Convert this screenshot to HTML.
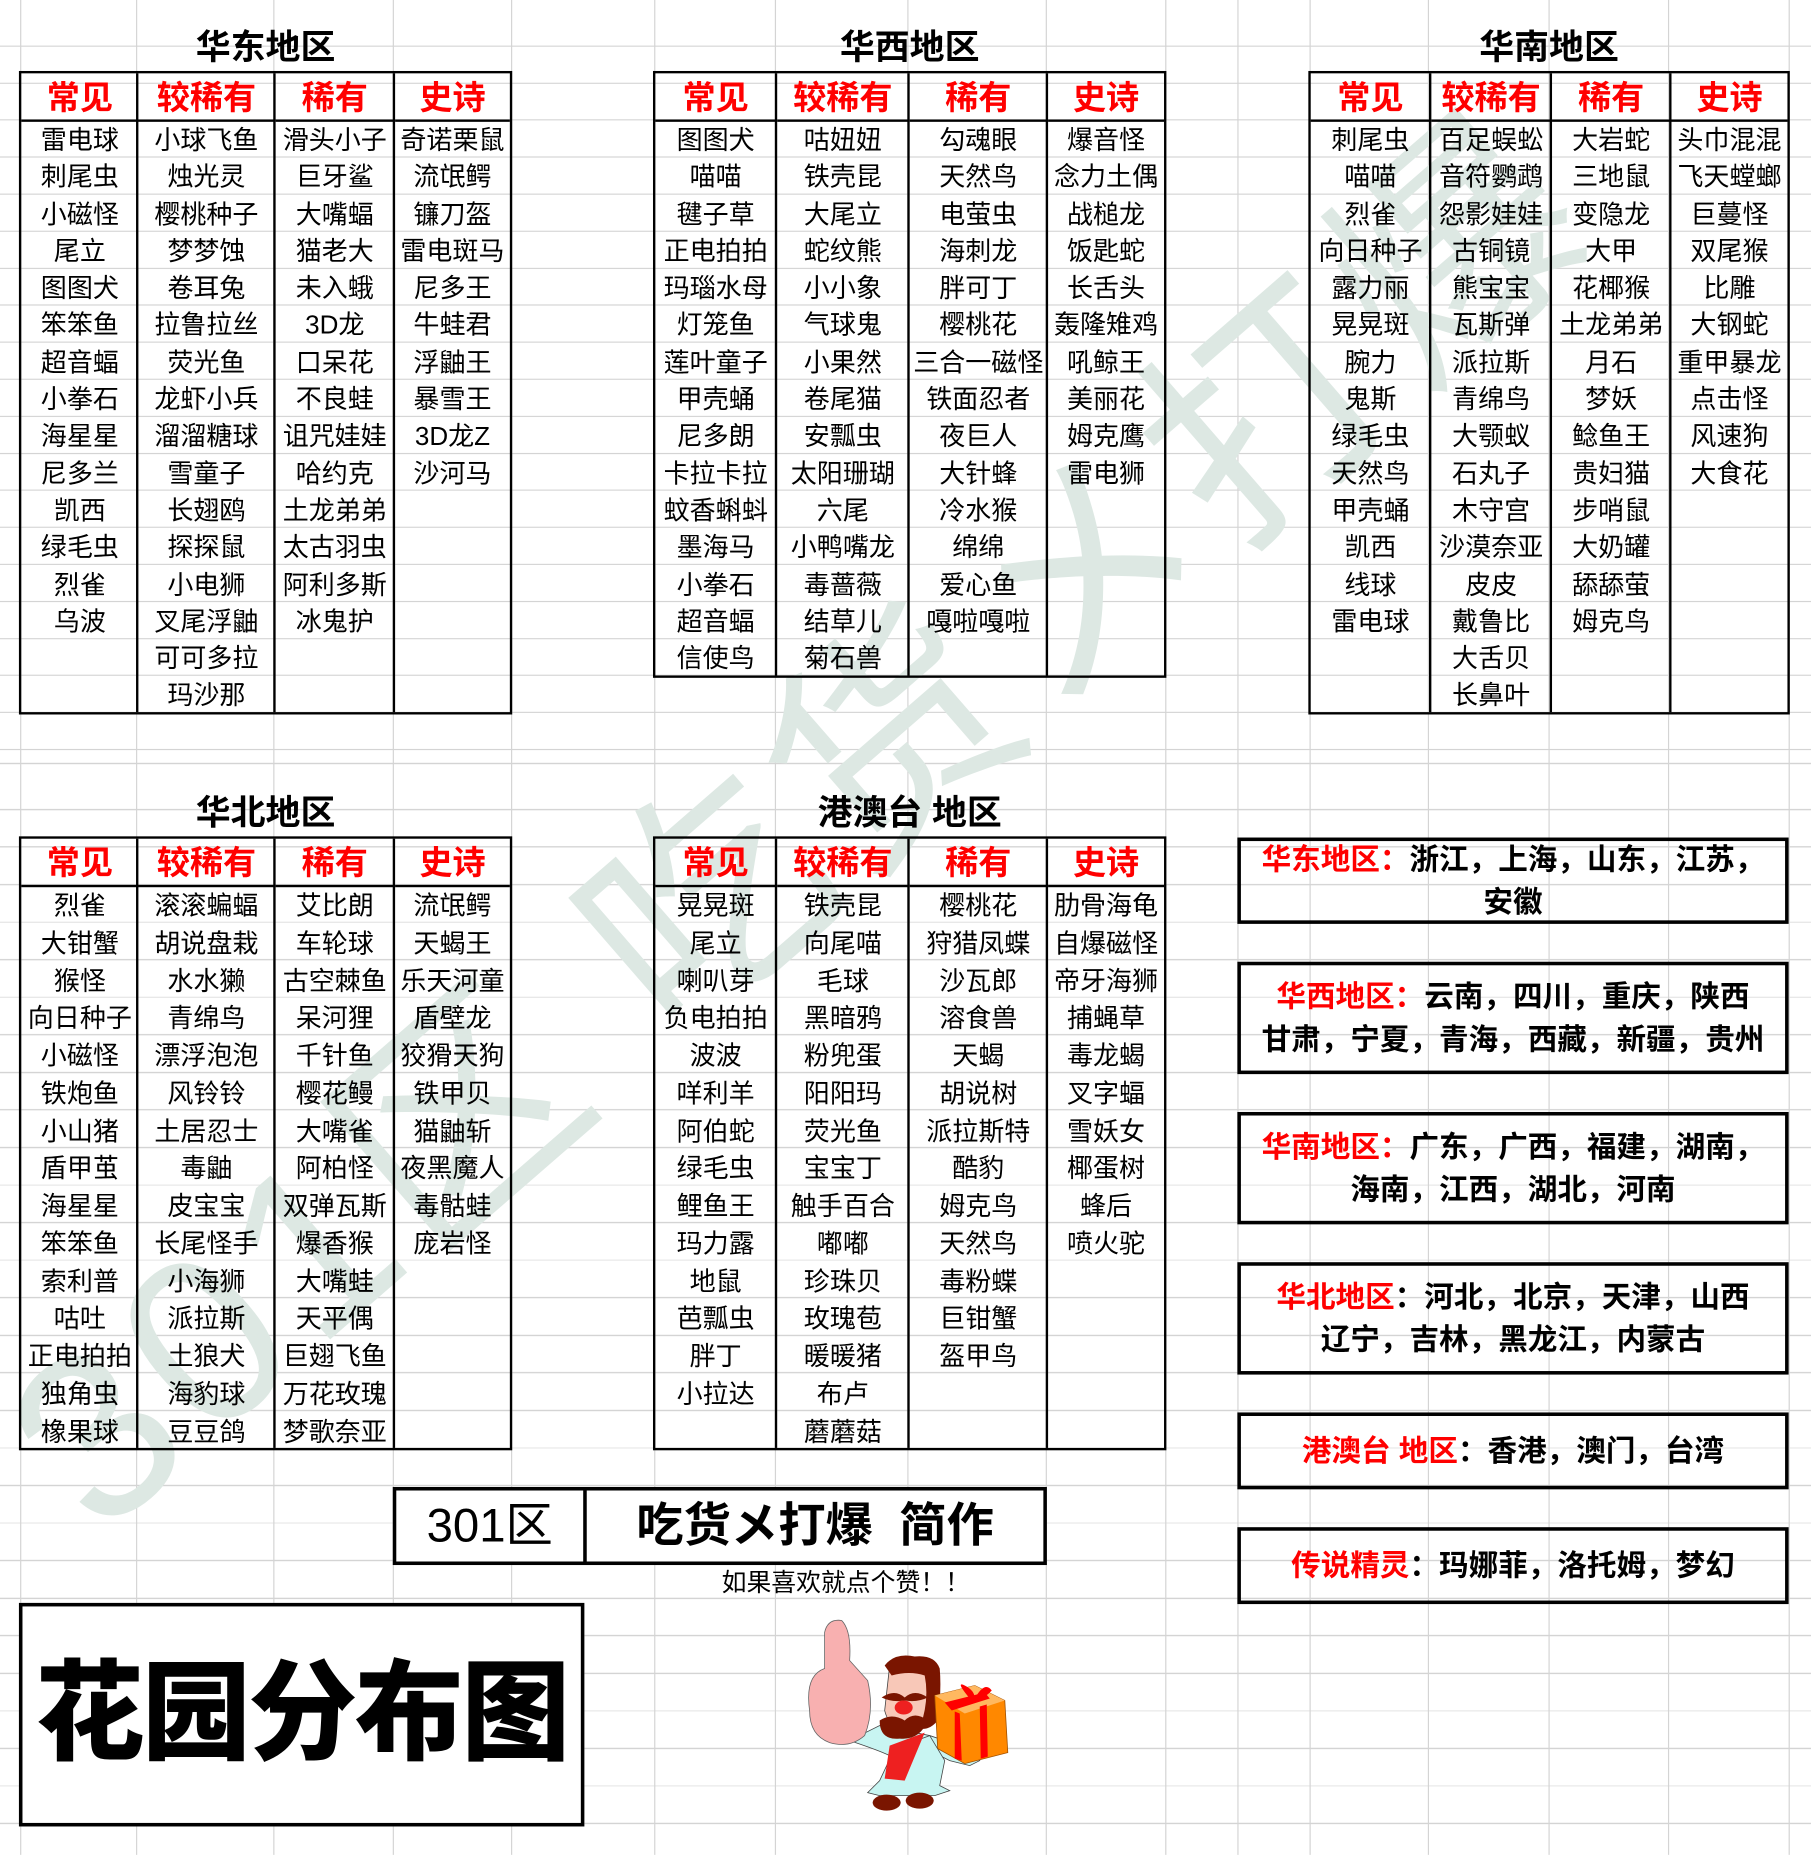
<!DOCTYPE html>
<html><head><meta charset="utf-8">
<style>
html,body{margin:0;padding:0;background:#fff;}
body{width:1811px;height:1855px;overflow:hidden;position:relative;}
#s{position:absolute;left:0;top:0;width:1531px;height:1568px;transform:scale(1.18295);transform-origin:0 0;font-family:"Liberation Sans","Noto Sans CJK SC",sans-serif;color:#000;}
.grid{position:absolute;left:0;width:1531px;}
.g1{top:0;height:640px;background-image:
repeating-linear-gradient(to bottom,transparent 0,transparent 30.3px,#d4d4d4 30.3px,#d4d4d4 31.3px);
background-position:0 8.1px;}
.g2{top:640px;height:928px;background-image:
repeating-linear-gradient(to bottom,transparent 0,transparent 30.75px,#d4d4d4 30.75px,#d4d4d4 31.75px);
background-position:0 13px;}
.vl{position:absolute;top:0;width:1px;height:1568px;background:#d4d4d4;}
.wm{position:absolute;left:40px;top:1250px;font-size:200px;color:#dde8e3;white-space:nowrap;transform:rotate(-41deg);transform-origin:0 50%;font-family:"Liberation Sans","Noto Sans CJK SC",sans-serif;letter-spacing:10px;line-height:200px;margin-top:-100px;}
.title{position:absolute;font-size:29.5px;font-weight:bold;text-align:center;line-height:40px;}
.tbl{position:absolute;border:2px solid #000;box-sizing:border-box;}
.col{position:absolute;top:0;bottom:0;border-left:2px solid #000;box-sizing:border-box;text-align:center;}
.col:first-child{border-left:none;}
.hd{height:41px;border-bottom:2px solid #000;box-sizing:border-box;color:#f00;font-weight:bold;font-size:28px;line-height:41px;}
.d{font-size:22px;white-space:nowrap;}
.t1 .d{line-height:31.3px;}
.t2 .d{line-height:31.75px;}
.box{position:absolute;left:1046px;width:466px;border:3px solid #000;box-sizing:border-box;font-weight:bold;font-size:25px;text-align:center;display:flex;align-items:center;justify-content:center;line-height:36px;}
.box span{color:#f00;}
</style></head><body><div id="s">
<div class="grid g1"></div><div class="grid g2"></div>
<div class="vl" style="left:17px"></div><div class="vl" style="left:115px"></div><div class="vl" style="left:231px"></div><div class="vl" style="left:332px"></div><div class="vl" style="left:432px"></div><div class="vl" style="left:553px"></div><div class="vl" style="left:655px"></div><div class="vl" style="left:767px"></div><div class="vl" style="left:884px"></div><div class="vl" style="left:985px"></div><div class="vl" style="left:1046px"></div><div class="vl" style="left:1107px"></div><div class="vl" style="left:1207px"></div><div class="vl" style="left:1309px"></div><div class="vl" style="left:1410px"></div><div class="vl" style="left:1512px"></div>

<div class="wm">301区 吃货メ打爆</div>

<div class="title" style="left:17px;width:415px;top:21px">华东地区</div>
<div class="title" style="left:553px;width:432px;top:21px">华西地区</div>
<div class="title" style="left:1107px;width:405px;top:21px">华南地区</div>

<div class="tbl t1" style="left:16px;top:60px;width:417px;height:544px;">
<div class="col" style="left:0;width:99px"><div class="hd">常见</div><div class="d">雷电球<br>刺尾虫<br>小磁怪<br>尾立<br>图图犬<br>笨笨鱼<br>超音蝠<br>小拳石<br>海星星<br>尼多兰<br>凯西<br>绿毛虫<br>烈雀<br>乌波</div></div>
<div class="col" style="left:97px;width:117px"><div class="hd">较稀有</div><div class="d">小球飞鱼<br>烛光灵<br>樱桃种子<br>梦梦蚀<br>卷耳兔<br>拉鲁拉丝<br>荧光鱼<br>龙虾小兵<br>溜溜糖球<br>雪童子<br>长翅鸥<br>探探鼠<br>小电狮<br>叉尾浮鼬<br>可可多拉<br>玛沙那</div></div>
<div class="col" style="left:213px;width:102px"><div class="hd">稀有</div><div class="d">滑头小子<br>巨牙鲨<br>大嘴蝠<br>猫老大<br>未入蛾<br>3D龙<br>口呆花<br>不良蛙<br>诅咒娃娃<br>哈约克<br>土龙弟弟<br>太古羽虫<br>阿利多斯<br>冰鬼护</div></div>
<div class="col" style="left:314px;width:99px"><div class="hd">史诗</div><div class="d">奇诺栗鼠<br>流氓鳄<br>镰刀盔<br>雷电斑马<br>尼多王<br>牛蛙君<br>浮鼬王<br>暴雪王<br>3D龙Z<br>沙河马</div></div>
</div>

<div class="tbl t1" style="left:552px;top:60px;width:434px;height:513px;">
<div class="col" style="left:0;width:102px"><div class="hd">常见</div><div class="d">图图犬<br>喵喵<br>毽子草<br>正电拍拍<br>玛瑙水母<br>灯笼鱼<br>莲叶童子<br>甲壳蛹<br>尼多朗<br>卡拉卡拉<br>蚊香蝌蚪<br>墨海马<br>小拳石<br>超音蝠<br>信使鸟</div></div>
<div class="col" style="left:101px;width:113px"><div class="hd">较稀有</div><div class="d">咕妞妞<br>铁壳昆<br>大尾立<br>蛇纹熊<br>小小象<br>气球鬼<br>小果然<br>卷尾猫<br>安瓢虫<br>太阳珊瑚<br>六尾<br>小鸭嘴龙<br>毒蔷薇<br>结草儿<br>菊石兽</div></div>
<div class="col" style="left:213px;width:118px"><div class="hd">稀有</div><div class="d">勾魂眼<br>天然鸟<br>电萤虫<br>海刺龙<br>胖可丁<br>樱桃花<br>三合一磁怪<br>铁面忍者<br>夜巨人<br>大针蜂<br>冷水猴<br>绵绵<br>爱心鱼<br>嘎啦嘎啦</div></div>
<div class="col" style="left:330px;width:100px"><div class="hd">史诗</div><div class="d">爆音怪<br>念力土偶<br>战槌龙<br>饭匙蛇<br>长舌头<br>轰隆雉鸡<br>吼鲸王<br>美丽花<br>姆克鹰<br>雷电狮</div></div>
</div>

<div class="tbl t1" style="left:1106px;top:60px;width:407px;height:544px;">
<div class="col" style="left:0;width:101px"><div class="hd">常见</div><div class="d">刺尾虫<br>喵喵<br>烈雀<br>向日种子<br>露力丽<br>晃晃斑<br>腕力<br>鬼斯<br>绿毛虫<br>天然鸟<br>甲壳蛹<br>凯西<br>线球<br>雷电球</div></div>
<div class="col" style="left:100px;width:103px"><div class="hd">较稀有</div><div class="d">百足蜈蚣<br>音符鹦鹉<br>怨影娃娃<br>古铜镜<br>熊宝宝<br>瓦斯弹<br>派拉斯<br>青绵鸟<br>大颚蚁<br>石丸子<br>木守宫<br>沙漠奈亚<br>皮皮<br>戴鲁比<br>大舌贝<br>长鼻叶</div></div>
<div class="col" style="left:202px;width:102px"><div class="hd">稀有</div><div class="d">大岩蛇<br>三地鼠<br>变隐龙<br>大甲<br>花椰猴<br>土龙弟弟<br>月石<br>梦妖<br>鲶鱼王<br>贵妇猫<br>步哨鼠<br>大奶罐<br>舔舔萤<br>姆克鸟</div></div>
<div class="col" style="left:303px;width:100px"><div class="hd">史诗</div><div class="d">头巾混混<br>飞天螳螂<br>巨蔓怪<br>双尾猴<br>比雕<br>大钢蛇<br>重甲暴龙<br>点击怪<br>风速狗<br>大食花</div></div>
</div>

<div class="title" style="left:17px;width:415px;top:668px">华北地区</div>
<div class="title" style="left:553px;width:432px;top:668px">港澳台 地区</div>

<div class="tbl t2" style="left:16px;top:707px;width:417px;height:519px;">
<div class="col" style="left:0;width:99px"><div class="hd">常见</div><div class="d">烈雀<br>大钳蟹<br>猴怪<br>向日种子<br>小磁怪<br>铁炮鱼<br>小山猪<br>盾甲茧<br>海星星<br>笨笨鱼<br>索利普<br>咕吐<br>正电拍拍<br>独角虫<br>橡果球</div></div>
<div class="col" style="left:97px;width:117px"><div class="hd">较稀有</div><div class="d">滚滚蝙蝠<br>胡说盘栽<br>水水獭<br>青绵鸟<br>漂浮泡泡<br>风铃铃<br>土居忍士<br>毒鼬<br>皮宝宝<br>长尾怪手<br>小海狮<br>派拉斯<br>土狼犬<br>海豹球<br>豆豆鸽</div></div>
<div class="col" style="left:213px;width:102px"><div class="hd">稀有</div><div class="d">艾比朗<br>车轮球<br>古空棘鱼<br>呆河狸<br>千针鱼<br>樱花鳗<br>大嘴雀<br>阿柏怪<br>双弹瓦斯<br>爆香猴<br>大嘴蛙<br>天平偶<br>巨翅飞鱼<br>万花玫瑰<br>梦歌奈亚</div></div>
<div class="col" style="left:314px;width:99px"><div class="hd">史诗</div><div class="d">流氓鳄<br>天蝎王<br>乐天河童<br>盾壁龙<br>狡猾天狗<br>铁甲贝<br>猫鼬斩<br>夜黑魔人<br>毒骷蛙<br>庞岩怪</div></div>
</div>

<div class="tbl t2" style="left:552px;top:707px;width:434px;height:519px;">
<div class="col" style="left:0;width:102px"><div class="hd">常见</div><div class="d">晃晃斑<br>尾立<br>喇叭芽<br>负电拍拍<br>波波<br>咩利羊<br>阿伯蛇<br>绿毛虫<br>鲤鱼王<br>玛力露<br>地鼠<br>芭瓢虫<br>胖丁<br>小拉达</div></div>
<div class="col" style="left:101px;width:113px"><div class="hd">较稀有</div><div class="d">铁壳昆<br>向尾喵<br>毛球<br>黑暗鸦<br>粉兜蛋<br>阳阳玛<br>荧光鱼<br>宝宝丁<br>触手百合<br>嘟嘟<br>珍珠贝<br>玫瑰苞<br>暖暖猪<br>布卢<br>蘑蘑菇</div></div>
<div class="col" style="left:213px;width:118px"><div class="hd">稀有</div><div class="d">樱桃花<br>狩猎凤蝶<br>沙瓦郎<br>溶食兽<br>天蝎<br>胡说树<br>派拉斯特<br>酷豹<br>姆克鸟<br>天然鸟<br>毒粉蝶<br>巨钳蟹<br>盔甲鸟</div></div>
<div class="col" style="left:330px;width:100px"><div class="hd">史诗</div><div class="d">肋骨海龟<br>自爆磁怪<br>帝牙海狮<br>捕蝇草<br>毒龙蝎<br>叉字蝠<br>雪妖女<br>椰蛋树<br>蜂后<br>喷火驼</div></div>
</div>

<div class="box" style="top:708px;height:73px;"><div><span>华东地区：</span>浙江，上海，山东，江苏，<br>安徽</div></div>
<div class="box" style="top:813px;height:95px;"><div><span>华西地区：</span>云南，四川，重庆，陕西<br>甘肃，宁夏，青海，西藏，新疆，贵州</div></div>
<div class="box" style="top:940px;height:95px;"><div><span>华南地区：</span>广东，广西，福建，湖南，<br>海南，江西，湖北，河南</div></div>
<div class="box" style="top:1067px;height:95px;"><div><span>华北地区</span>：河北，北京，天津，山西<br>辽宁，吉林，黑龙江，内蒙古</div></div>
<div class="box" style="top:1194px;height:65px;"><div><span>港澳台 地区</span>：香港，澳门，台湾</div></div>
<div class="box" style="top:1291px;height:65px;"><div><span>传说精灵</span>：玛娜菲，洛托姆，梦幻</div></div>

<div style="position:absolute;left:332px;top:1257px;width:553px;height:66px;border:3px solid #000;box-sizing:border-box;background:#fff;">
<div style="position:absolute;left:0;top:0;width:158px;height:60px;border-right:3px solid #000;font-size:40px;line-height:60px;text-align:center;">301区</div>
<div style="position:absolute;left:161px;top:0;width:386px;height:60px;font-size:40px;font-weight:bold;line-height:60px;text-align:center;">吃货メ打爆&nbsp;&nbsp;简作</div>
</div>
<div style="position:absolute;left:553px;width:324px;top:1324px;font-size:21px;line-height:30px;text-align:center;">如果喜欢就点个赞！！</div>

<div style="position:absolute;left:16px;top:1355px;width:478px;height:189px;border:3px solid #000;box-sizing:border-box;font-size:92px;font-weight:900;line-height:183px;text-align:center;letter-spacing:-2px;background:#fff;">花园分布图</div>

<svg style="position:absolute;left:659px;top:1336px" width="220" height="220" viewBox="0 0 260 260">
<path d="M70 160 Q100 170 110 175 L150 170 L170 180 L190 185 L200 180 L180 165 L150 155 L100 145 Z" fill="#c8f5f2" stroke="#444" stroke-width="0.8"/>
<path d="M115 168 L150 155 L165 180 L160 205 L170 210 L155 215 L100 215 L88 212 L100 200 Z" fill="#c8f5f2" stroke="#444" stroke-width="0.8"/>
<path d="M110 165 L145 152 L125 200 L105 198 Z" fill="#ee2020"/>
<ellipse cx="107" cy="222" rx="14" ry="8" fill="#7a1500"/>
<ellipse cx="140" cy="220" rx="14" ry="8" fill="#7a1500"/>
<path d="M110 85 Q125 75 145 80 Q160 90 155 130 Q150 150 130 152 Q110 150 105 130 Z" fill="#f8c8b8" stroke="#444" stroke-width="0.8"/>
<path d="M105 85 Q115 72 135 76 Q155 74 160 88 Q162 110 158 140 Q150 150 140 148 Q150 120 145 95 Q130 90 112 95 Z" fill="#7a1500"/>
<path d="M100 140 Q100 160 120 158 Q140 160 148 140 Q135 130 125 140 Q112 132 100 140Z" fill="#7a1500"/>
<path d="M102 117 Q115 108 125 117 Q135 108 148 117 Q138 122 125 120 Q112 122 102 117Z" fill="#7a1500"/>
<ellipse cx="124" cy="127" rx="9" ry="7" fill="#ee2020"/>
<path d="M30 130 Q25 95 45 88 L45 52 Q48 38 62 40 Q72 50 70 80 L88 100 Q95 130 85 155 Q70 168 50 162 Q30 155 30 130Z" fill="#f8b0b0" stroke="#666" stroke-width="0.8"/>
<path d="M155 115 L195 105 L225 120 L228 172 L185 183 L158 168 Z" fill="#ff8800" stroke="#a05000" stroke-width="0.8"/>
<path d="M155 115 L195 105 L225 120 L185 133 Z" fill="#ffb860"/>
<path d="M165 122 L205 112 L210 118 L172 130Z M175 131 L180 133 L182 180 L175 178Z M200 126 L207 124 L208 176 L201 178Z" fill="#f00"/>
<path d="M190 118 Q175 100 185 105 Q195 110 195 118 Q205 100 212 110 Q205 118 195 120Z" fill="#f00"/>
</svg>
</div></body></html>
